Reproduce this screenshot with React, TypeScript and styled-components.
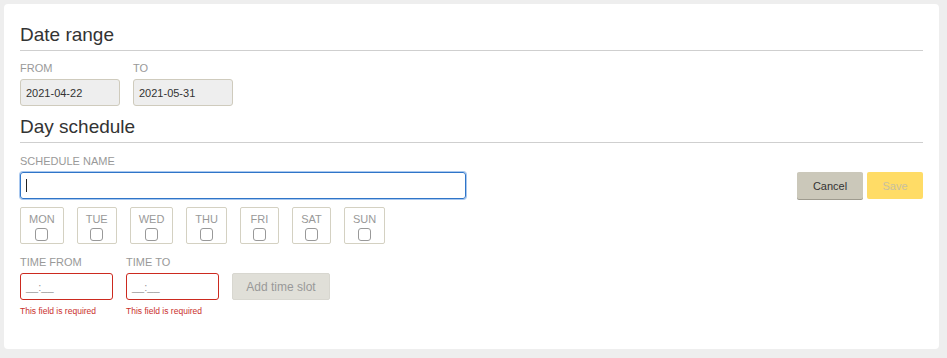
import React from "react";
import styled, { createGlobalStyle } from "styled-components";

const Global = createGlobalStyle`
  html, body { margin: 0; padding: 0; background: #eeeeee; }
  body { font-family: "Liberation Sans", Arial, sans-serif; color: #333; }
  * { box-sizing: border-box; }
`;

const Page = styled.div`
  padding: 4px 8px 9px 4px;
`;

const Card = styled.div`
  background: #fff;
  border-radius: 4px;
  padding: 20px 16px 30px 16px;
  height: 345px;
`;

const SectionTitle = styled.h2<{ $mt?: number }>`
  margin: ${(p) => p.$mt ?? 0}px 0 0;
  font-size: 19px;
  font-weight: 400;
  color: #333;
  line-height: 22px;
  padding-bottom: 4px;
  border-bottom: 1px solid #cfcfcf;
`;

const Label = styled.div`
  font-size: 11px;
  color: #999;
  text-transform: uppercase;
  line-height: 12px;
  margin-bottom: 5px;
`;

const Row = styled.div<{ $gap?: number; $mt?: number }>`
  display: flex;
  gap: ${(p) => p.$gap ?? 13}px;
  margin-top: ${(p) => p.$mt ?? 0}px;
  align-items: flex-start;
`;

const Field = styled.div`
  display: flex;
  flex-direction: column;
`;

const Block = styled.div<{ $mt?: number }>`
  margin-top: ${(p) => p.$mt ?? 0}px;
`;

const DateInput = styled.div`
  width: 100px;
  height: 27px;
  background: #eeeeee;
  border: 1px solid #cfcbbd;
  border-radius: 3px;
  font-size: 11px;
  color: #333;
  display: flex;
  align-items: center;
  padding-left: 5px;
`;

const NameRow = styled.div`
  display: flex;
  align-items: center;
  justify-content: space-between;
`;

const NameInput = styled.div`
  width: 446px;
  height: 27px;
  border: 1px solid #2f75c8;
  border-radius: 3px;
  box-shadow: 0 0 0 1px #a9c8ef;
  display: flex;
  align-items: center;
  padding-left: 5px;
`;

const Caret = styled.span`
  width: 1px;
  height: 13px;
  background: #222;
`;

const Buttons = styled.div`
  display: flex;
  gap: 4px;
`;

const Button = styled.button<{ $variant: "cancel" | "save" | "add" }>`
  font-family: inherit;
  font-size: 11px;
  height: 27px;
  border: none;
  border-radius: 2px;
  padding: 0;
  cursor: pointer;
  ${(p) =>
    p.$variant === "cancel"
      ? `width: 66px; background: #cbc8ba; color: #333; box-shadow: 0 1px 0 #9e9b8f;`
      : p.$variant === "save"
      ? `width: 56px; background: #ffdc66; color: #c8c0a0;`
      : `width: 98px; background: #e0dfd8; color: #999; font-size: 12px; border: 1px solid #d8d7d0;`}
`;

const DayBox = styled.label`
  display: flex;
  flex-direction: column;
  align-items: center;
  border: 1px solid #d4d1c2;
  border-radius: 2px;
  height: 37px;
  padding: 5px 8px 0;
  font-size: 11px;
  color: #999;
  line-height: 12px;
  min-width: 39px;
`;

const Check = styled.span`
  width: 13px;
  height: 13px;
  border: 1px solid #999;
  border-radius: 3px;
  margin-top: 3px;
  background: #fff;
`;

const TimeInput = styled.div`
  width: 93px;
  height: 27px;
  border: 1px solid #cc2a1f;
  border-radius: 3px;
  font-size: 11px;
  color: #999;
  display: flex;
  align-items: center;
  padding-left: 5px;
`;

const ErrorText = styled.div`
  font-size: 8.5px;
  color: #c9302c;
  margin-top: 6px;
`;

const days = ["MON", "TUE", "WED", "THU", "FRI", "SAT", "SUN"];

export default function App() {
  return (
    <>
      <Global />
      <Page>
        <Card>
          <SectionTitle>Date range</SectionTitle>
          <Row $mt={11}>
            <Field>
              <Label>From</Label>
              <DateInput>2021-04-22</DateInput>
            </Field>
            <Field>
              <Label>To</Label>
              <DateInput>2021-05-31</DateInput>
            </Field>
          </Row>
          <SectionTitle $mt={10}>Day schedule</SectionTitle>
          <Block $mt={12}>
            <Label>Schedule name</Label>
            <NameRow>
              <NameInput>
                <Caret />
              </NameInput>
              <Buttons>
                <Button $variant="cancel">Cancel</Button>
                <Button $variant="save">Save</Button>
              </Buttons>
            </NameRow>
          </Block>
          <Row $mt={8}>
            {days.map((d) => (
              <DayBox key={d}>
                {d}
                <Check />
              </DayBox>
            ))}
          </Row>
          <Row $mt={12}>
            <Field>
              <Label>Time from</Label>
              <TimeInput>__:__</TimeInput>
              <ErrorText>This field is required</ErrorText>
            </Field>
            <Field>
              <Label>Time to</Label>
              <TimeInput>__:__</TimeInput>
              <ErrorText>This field is required</ErrorText>
            </Field>
            <Field>
              <Label>&nbsp;</Label>
              <Button $variant="add">Add time slot</Button>
            </Field>
          </Row>
        </Card>
      </Page>
    </>
  );
}
